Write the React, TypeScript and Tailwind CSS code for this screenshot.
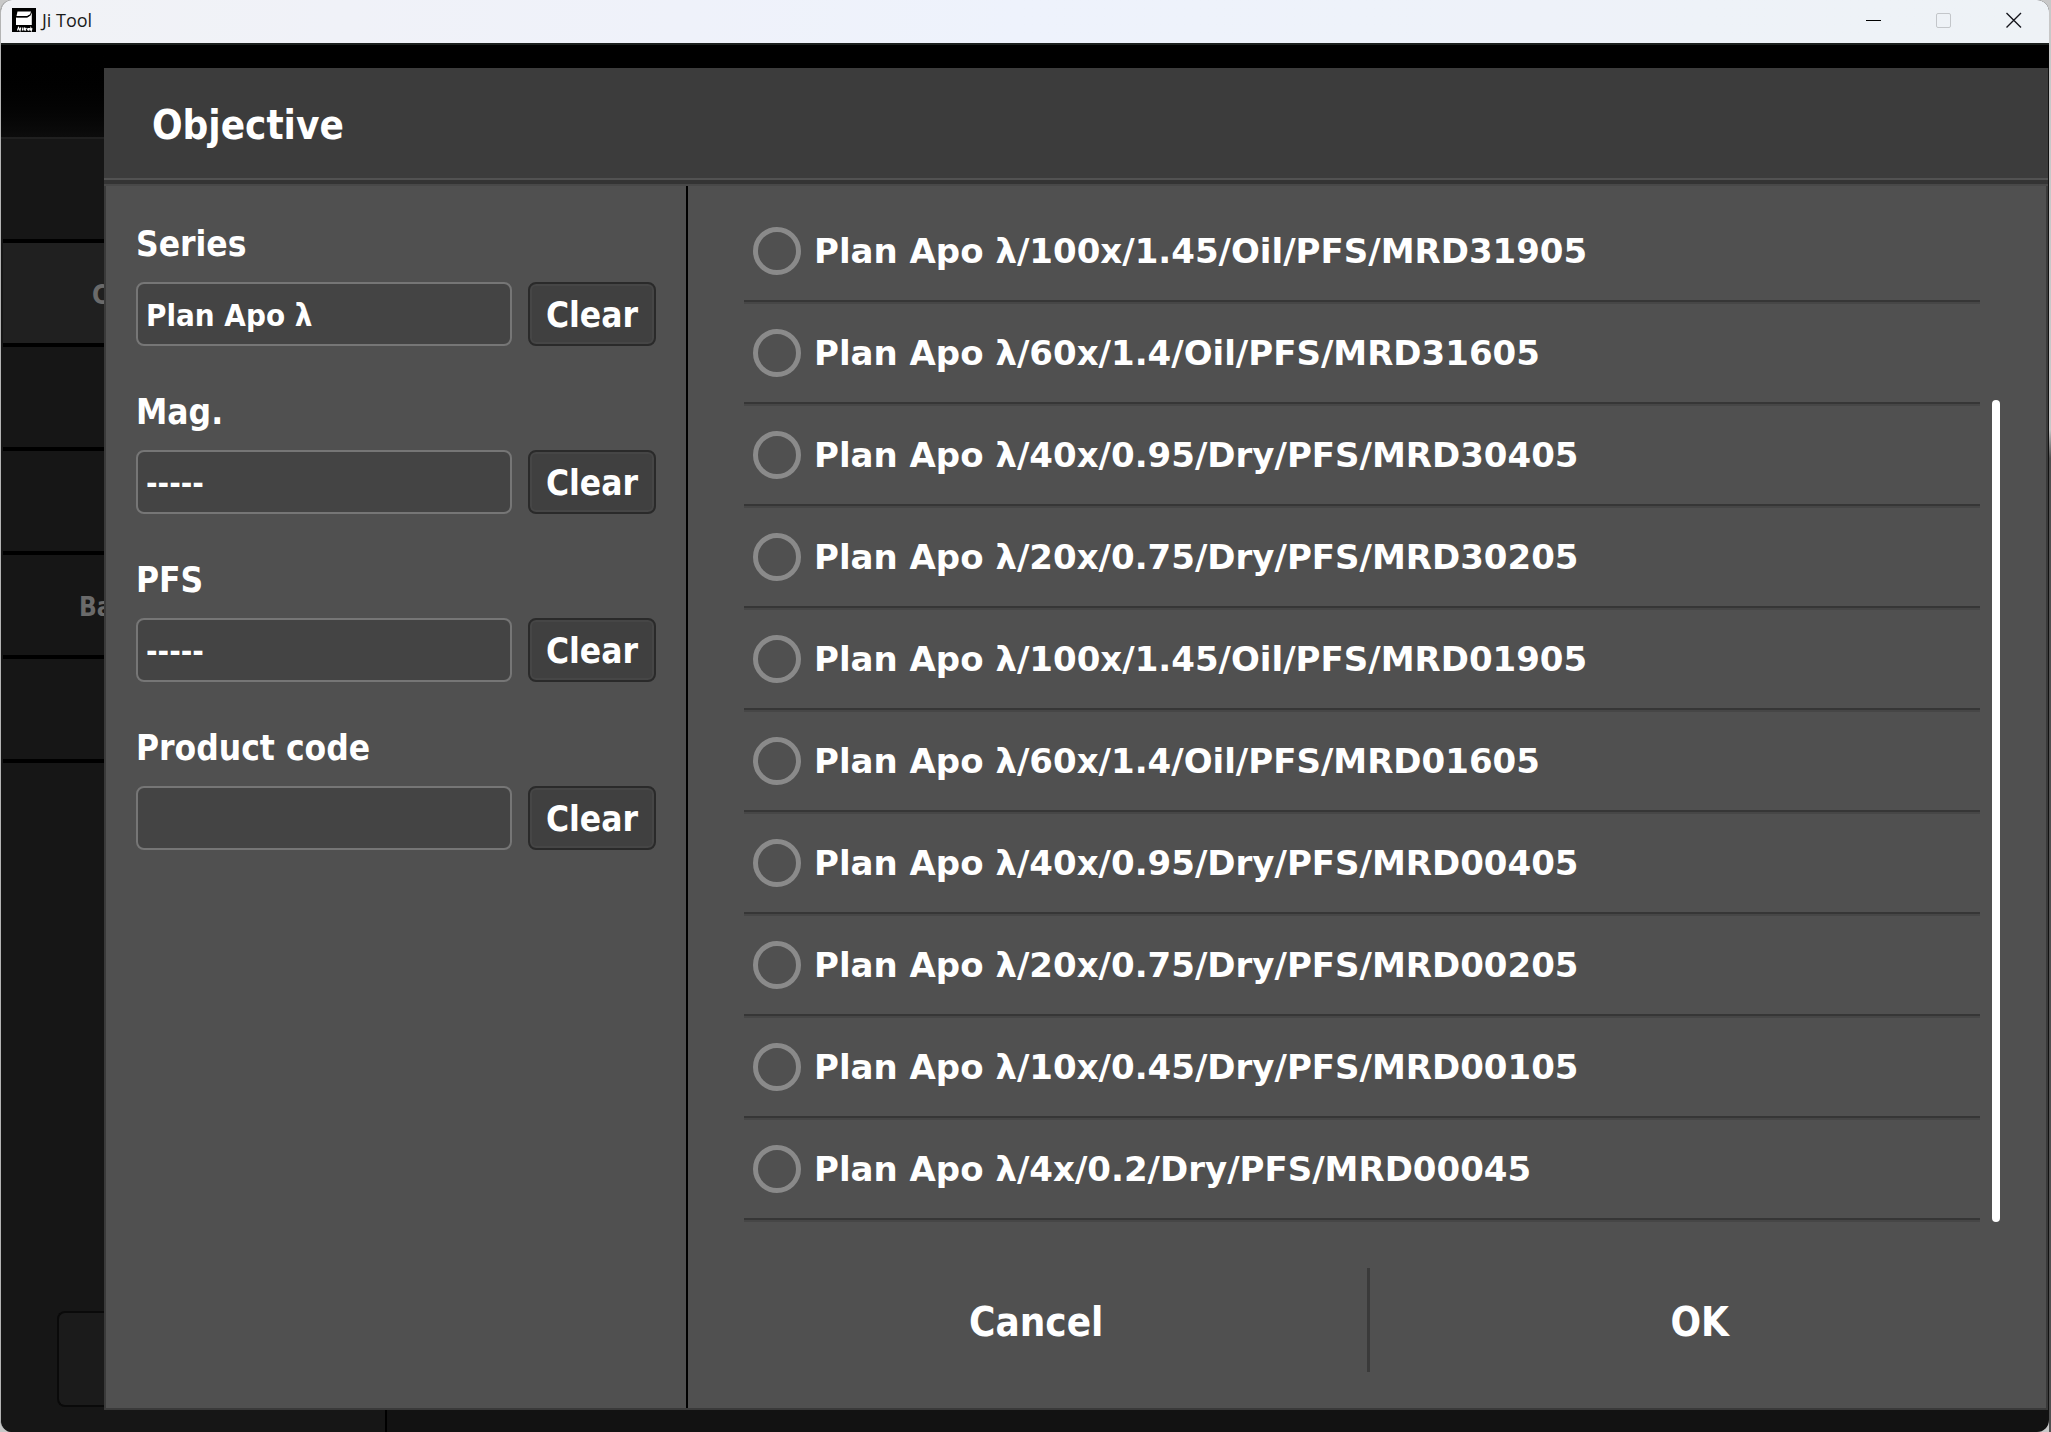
import { useState } from "react";

const objectives = [
  "Plan Apo λ/100x/1.45/Oil/PFS/MRD31905",
  "Plan Apo λ/60x/1.4/Oil/PFS/MRD31605",
  "Plan Apo λ/40x/0.95/Dry/PFS/MRD30405",
  "Plan Apo λ/20x/0.75/Dry/PFS/MRD30205",
  "Plan Apo λ/100x/1.45/Oil/PFS/MRD01905",
  "Plan Apo λ/60x/1.4/Oil/PFS/MRD01605",
  "Plan Apo λ/40x/0.95/Dry/PFS/MRD00405",
  "Plan Apo λ/20x/0.75/Dry/PFS/MRD00205",
  "Plan Apo λ/10x/0.45/Dry/PFS/MRD00105",
  "Plan Apo λ/4x/0.2/Dry/PFS/MRD00045",
];

const sideItems = [
  { text: "", style: "bg-[#161616]" },
  { text: "C", style: "bg-[#202020] pl-[89px]" },
  { text: "", style: "bg-[#161616]" },
  { text: "", style: "bg-[#161616]" },
  { text: "Ba", style: "bg-[#161616] pl-[76px]" },
  { text: "", style: "bg-[#161616]" },
];

const fieldStyle =
  "h-16 min-w-0 flex-1 appearance-none rounded-lg border-2 border-[#767676] bg-[#444444] px-2 pt-[2px] text-[31px] font-bold text-white outline-none";

function AppIcon() {
  return (
    <svg viewBox="0 0 24 24" className="size-6" aria-hidden="true">
      <rect width="24" height="24" fill="#000" />
      <path d="M5.5 3.5 H19 L18 6.5 L15 8 H4.5 Z" fill="#fff" />
      <path d="M4 9.6 H15.5 L18.5 7.6 L19.8 4.5 V17 H4 Z" fill="#fff" />
      <path d="M4.5 8.9 H15 L18 7" stroke="#000" strokeWidth="0.9" fill="none" />
      <path
        d="M5.5 22.5 L6.5 19.5 L8 22.5 L8.8 19.5 M10.3 22.5 L11 19.5 M12 22.5 L12.8 19.3 M14.6 20.3 L12.8 21.2 L14 22.5 M15.5 22 L16 20.5 H17.3 L16.8 22.2 H15.5 M18.2 22.5 L18.8 20.4 L19.3 22.4 L20 20.2"
        stroke="#fff"
        strokeWidth="1.2"
        fill="none"
      />
    </svg>
  );
}

function TitleBar() {
  return (
    <header className="flex h-[43px] shrink-0 items-center bg-linear-to-r from-[#f1f2f6] via-[#eef2fc] to-[#eef2f6] pb-[3px] pl-[11px]">
      <AppIcon />
      <h1 className="ml-[6px] flex-1 font-['Open_Sans',sans-serif] text-[18px] text-[#1a1a1a]">Ji Tool</h1>
      <button aria-label="Minimize" className="flex h-10 w-[70px] items-center justify-center">
        <svg viewBox="0 0 16 16" className="size-4">
          <path d="M0 8.5 H15" stroke="#000" />
        </svg>
      </button>
      <button aria-label="Maximize" disabled className="flex h-10 w-[70px] items-center justify-center">
        <svg viewBox="0 0 16 16" className="size-4" fill="none">
          <rect x="0.5" y="1.5" width="14" height="14" rx="1.5" stroke="#c3c6ca" />
        </svg>
      </button>
      <button aria-label="Close" className="flex h-10 w-[70px] items-center justify-center">
        <svg viewBox="0 0 16 16" className="size-4">
          <path d="M0.5 1 L15 15.5 M15 1 L0.5 15.5" stroke="#15151c" strokeWidth="1.4" />
        </svg>
      </button>
    </header>
  );
}

function Sidebar() {
  return (
    <nav className="flex w-[103px] shrink-0 flex-col overflow-hidden bg-[#161616]">
      <div className="h-[94px] shrink-0 border-b-2 border-[#202020] bg-linear-to-b from-black to-[#0c0c0c]" />
      {sideItems.map((item, i) => (
        <div
          key={i}
          className={`ml-[2px] flex h-[104px] shrink-0 items-center border-b-4 border-black pt-1 text-[26px] font-bold text-[#6a6a6a] ${item.style}`}
        >
          {item.text}
        </div>
      ))}
      <div className="mt-auto mb-[25px] ml-14 h-24 shrink-0 rounded-l-lg border-2 border-r-0 border-[#0a0a0a] bg-[#1b1b1b]" />
    </nav>
  );
}

function ClearButton({ onClick }: { onClick: () => void }) {
  return (
    <button
      onClick={onClick}
      className="h-16 w-32 shrink-0 rounded-lg border-2 border-[#2a2a2a] bg-[#404040] pt-[2px] text-[35px] font-bold text-white inset-ring-2 inset-ring-[#464646]"
    >
      Clear
    </button>
  );
}

function SelectField({ id, label, initial }: { id: string; label: string; initial: string }) {
  const [value, setValue] = useState(initial);
  return (
    <div>
      <label htmlFor={id} className="mb-[18px] block h-10 text-[35px] leading-10 font-bold">
        {label}
      </label>
      <div className="flex gap-4">
        <select id={id} value={value} onChange={(e) => setValue(e.target.value)} className={fieldStyle}>
          <option>-----</option>
          {initial !== "-----" && <option>{initial}</option>}
        </select>
        <ClearButton onClick={() => setValue("-----")} />
      </div>
    </div>
  );
}

function Filters() {
  const [code, setCode] = useState("");
  return (
    <section className="flex w-[580px] shrink-0 flex-col gap-[46px] px-[30px] pt-[38px]">
      <SelectField id="series" label="Series" initial="Plan Apo λ" />
      <SelectField id="mag" label="Mag." initial="-----" />
      <SelectField id="pfs" label="PFS" initial="-----" />
      <div>
        <label htmlFor="code" className="mb-[18px] block h-10 text-[35px] leading-10 font-bold">
          Product code
        </label>
        <div className="flex gap-4">
          <input id="code" type="text" value={code} onChange={(e) => setCode(e.target.value)} className={fieldStyle} />
          <ClearButton onClick={() => setCode("")} />
        </div>
      </div>
    </section>
  );
}

function ObjectiveList() {
  const [selected, setSelected] = useState("");
  return (
    <div className="flex gap-3 pt-4 pr-[46px] pl-14">
      <div role="radiogroup" aria-label="Objective" className="flex-1">
        {objectives.map((name) => (
          <label
            key={name}
            className="flex h-[102px] items-center gap-[13px] border-b-2 border-[#464646] pb-[2px] pl-[9px] font-['DejaVu_Sans',sans-serif] text-[34px] font-bold whitespace-nowrap shadow-[inset_0_-2px_0_#363636]"
          >
            <input
              type="radio"
              name="objective"
              checked={selected === name}
              onChange={() => setSelected(name)}
              className="size-12 shrink-0 appearance-none rounded-full border-[5px] border-[#8a8a8a] checked:bg-white"
            />
            {name}
          </label>
        ))}
      </div>
      <div className="flex w-2 flex-col pt-[198px]">
        <div className="flex-1 rounded-full bg-white" />
      </div>
    </div>
  );
}

function Dialog() {
  return (
    <div role="dialog" aria-labelledby="dialog-title" className="mr-px flex flex-1 flex-col text-white">
      <div className="flex h-[110px] items-center bg-[#3c3c3c] pt-1 pl-12">
        <h2 id="dialog-title" className="text-[40px] font-bold">
          Objective
        </h2>
      </div>
      <div className="h-2 border-t-2 border-b-2 border-t-[#525252] border-b-[#484848] bg-[#343434]" />
      <div className="flex flex-1 border-2 border-t-0 border-[#3a3a3a] bg-[#505050]">
        <Filters />
        <section className="flex flex-1 flex-col border-l-2 border-black">
          <ObjectiveList />
          <div className="mt-[46px] mb-9 flex h-[104px] pr-4 pl-[18px]">
            <button className="flex-1 pt-1 text-[40px] font-bold">Cancel</button>
            <div className="w-[3px] bg-[#3a3a3a]" />
            <button className="flex-1 pt-1 text-[40px] font-bold">OK</button>
          </div>
        </section>
      </div>
    </div>
  );
}

export default function App() {
  return (
    <div className="flex min-h-screen bg-linear-to-b from-[#c8c8c8] from-30% to-[#505050] to-32% font-['DejaVu_Sans_Condensed','DejaVu_Sans',sans-serif]">
      <div className="flex flex-1 bg-[#c8c8c8]">
        <div className="flex flex-1 flex-col overflow-hidden rounded-xl border-l border-[#b4b4b4] bg-[#121212]">
          <TitleBar />
          <main className="flex flex-1 border-t-2 border-[#1b1f1d]">
            <Sidebar />
            <div className="flex flex-1 flex-col">
              <div className="h-[23px] bg-black" />
              <Dialog />
              <div className="flex h-[22px]">
                <div className="w-[283px] border-r-2 border-black bg-[#161616]" />
              </div>
            </div>
          </main>
        </div>
      </div>
      <div className="w-[2px]" />
    </div>
  );
}
